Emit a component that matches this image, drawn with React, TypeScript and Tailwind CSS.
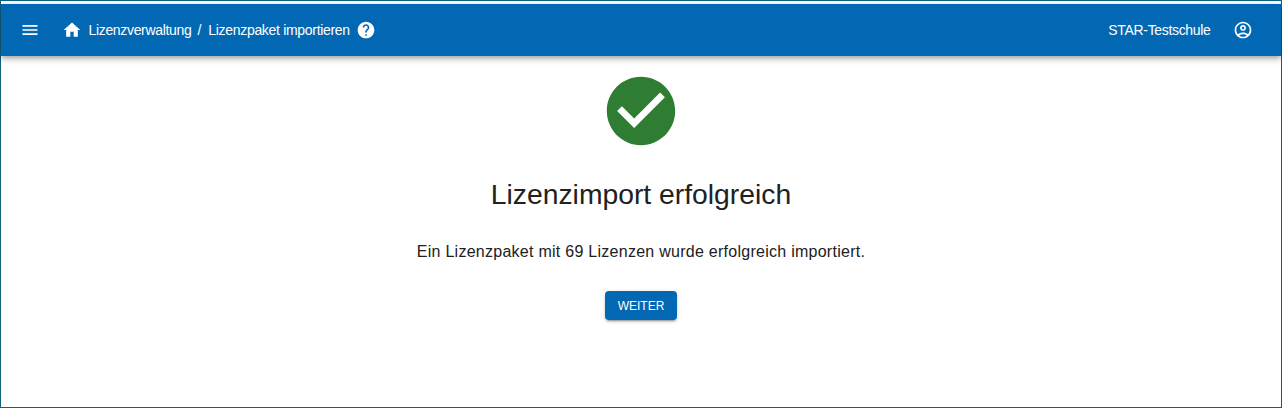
export default function App() {
  return (
    <div className="h-[408px] w-[1282px] overflow-hidden bg-white font-['Liberation_Sans',Arial,sans-serif]">
      <div className="flex h-full flex-col border border-[#11607f]">
        <div className="h-[3px] shrink-0 bg-white" />
        <header className="z-10 flex h-[52px] shrink-0 items-center bg-[#0368b3] text-white shadow-[0_2px_4px_-1px_rgba(0,0,0,0.2),0_4px_5px_0_rgba(0,0,0,0.14),0_1px_10px_0_rgba(0,0,0,0.12)]">
          <svg viewBox="0 0 24 24" className="ml-[18.5px] h-[20px] w-[20px] shrink-0 fill-white"><path d="M3 18h18v-2H3v2zm0-5h18v-2H3v2zm0-7v2h18V6H3z" /></svg>
          <svg viewBox="0 0 24 24" className="ml-[22.5px] h-[20px] w-[20px] fill-white"><path d="M10 20v-6h4v6h5v-8h3L12 3 2 12h3v8z" /></svg>
          <span className="ml-[6.5px] text-[14px] tracking-[-0.33px]">Lizenzverwaltung</span>
          <span className="ml-[6px] mr-[7px] text-[14px]">/</span>
          <span className="text-[14px] tracking-[-0.31px]">Lizenzpaket importieren</span>
          <svg viewBox="0 0 24 24" className="ml-[6px] h-[20px] w-[20px] fill-white"><path d="M12 2C6.48 2 2 6.48 2 12s4.48 10 10 10 10-4.48 10-10S17.52 2 12 2zm1 17h-2v-2h2v2zm2.07-7.75l-.9.92C13.45 12.9 13 13.5 13 15h-2v-.5c0-1.1.45-2.1 1.17-2.83l1.24-1.26c.37-.36.59-.86.59-1.41 0-1.1-.9-2-2-2s-2 .9-2 2H8c0-2.21 1.79-4 4-4s4 1.79 4 4c0 .88-.36 1.68-.93 2.25z" /></svg>
          <span className="ml-auto text-[14px] tracking-[-0.33px]">STAR-Testschule</span>
          <svg viewBox="0 0 24 24" className="ml-[22px] mr-[28.5px] h-[20px] w-[20px] fill-white"><path d="M12 2C6.48 2 2 6.48 2 12s4.48 10 10 10 10-4.48 10-10S17.52 2 12 2zM7.35 18.5C8.66 17.56 10.26 17 12 17s3.34.56 4.65 1.5c-1.31.94-2.91 1.5-4.65 1.5s-3.34-.56-4.65-1.5zm10.79-1.38C16.45 15.8 14.32 15 12 15s-4.45.8-6.14 2.12C4.7 15.73 4 13.95 4 12c0-4.42 3.58-8 8-8s8 3.58 8 8c0 1.95-.7 3.73-1.86 5.12z" /><path d="M12 6c-1.93 0-3.5 1.57-3.5 3.5S10.07 13 12 13s3.5-1.57 3.5-3.5S13.93 6 12 6zm0 5c-.83 0-1.5-.67-1.5-1.5S11.17 8 12 8s1.5.67 1.5 1.5S12.83 11 12 11z" /></svg>
        </header>
        <main className="flex flex-1 flex-col items-center pt-[14px] text-[#212121]">
          <svg viewBox="0 0 24 24" className="h-[82px] w-[82px] fill-[#2e7d32]"><path d="M12 2C6.48 2 2 6.48 2 12s4.48 10 10 10 10-4.48 10-10S17.52 2 12 2zm-2 15l-5-5 1.41-1.41L10 14.17l7.59-7.59L19 8l-9 9z" /></svg>
          <h1 className="mt-[22px] text-[28.3px] leading-[40px]">Lizenzimport erfolgreich</h1>
          <p className="mt-[26px] text-[16px] leading-[24px] tracking-[0.265px]">Ein Lizenzpaket mit 69 Lizenzen wurde erfolgreich importiert.</p>
          <button className="mt-[27px] h-[29px] w-[72px] rounded-[4px] bg-[#0368b3] text-[12px] text-white shadow-[0_3px_1px_-2px_rgba(0,0,0,0.2),0_2px_2px_0_rgba(0,0,0,0.14),0_1px_5px_0_rgba(0,0,0,0.12)]">WEITER</button>
        </main>
      </div>
    </div>
  );
}
